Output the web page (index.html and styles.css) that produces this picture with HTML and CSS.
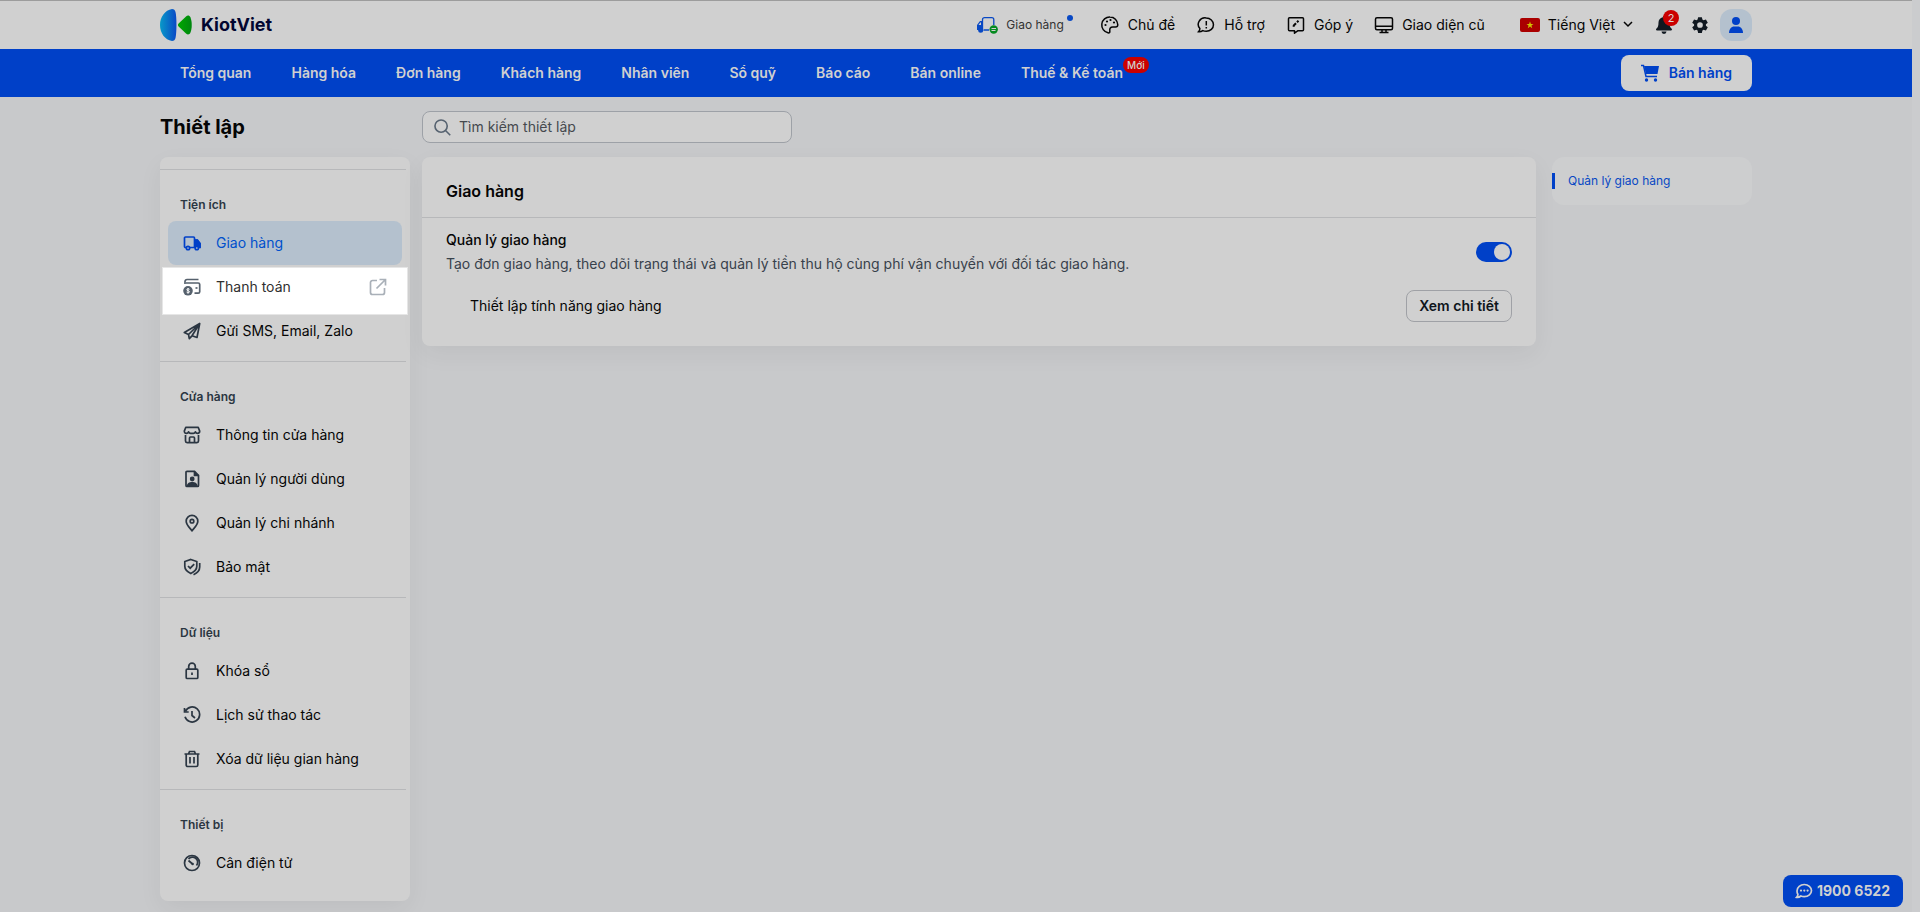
FILE: index.html
```html
<!DOCTYPE html>
<html lang="vi">
<head>
<meta charset="utf-8">
<meta name="viewport" content="width=device-width, initial-scale=1">
<title>KiotViet - Thiết lập</title>
<link rel="stylesheet" href="styles.css">
</head>
<body>
<div class="page">
  <header class="topbar">
    <a class="brand" href="#">
      <svg class="brand-mark" viewBox="0 0 32 32" aria-hidden="true">
        <defs>
          <linearGradient id="blue" x1="0" y1="0" x2="1" y2="0"><stop offset="0" stop-color="#0899c8"/><stop offset="1" stop-color="#0948c6"/></linearGradient>
          <linearGradient id="green" x1="0" y1="0" x2="1" y2="0"><stop offset="0" stop-color="#00a800"/><stop offset="1" stop-color="#00860f"/></linearGradient>
        </defs>
        <path fill="url(#blue)" d="M12 0C5 1 0 8 0 16s5 15 12 16c2 0 3-1 3.500-3 1.300-5 1.300-21 0-26C15 1 14 0 12 0z"/>
        <path fill="url(#green)" d="M18.600 14.500 26 7.500c1.500-1.400 3.500-1.200 4.400.8 1.800 4.400 1.800 11 0 15.400-.9 2-2.900 2.200-4.400.8l-7.400-7c-.9-.9-.9-2.100 0-3z"/>
      </svg>
      <span>KiotViet</span>
    </a>
    <nav class="tools" aria-label="Tiện ích nhanh">
      <a class="tool tool-small" href="#">
        <svg class="icon-truck" viewBox="0 0 22 18" fill="none" aria-hidden="true">
          <path d="M6.500 13V3.700a2 2 0 0 1 2-2h7.300a2 2 0 0 1 2 2V9M7.500 14H13" stroke="#0848c4" stroke-width="1.300"/>
          <path fill="#0848c4" fill-rule="evenodd" d="M4 5h2.500v9H1V9zM4.300 6.500 2.500 9H5V6.500z"/><circle cx="4.700" cy="14.200" r="2.500" fill="#0848c4"/>
          <circle cx="17.700" cy="13.500" r="4.200" fill="#058a20"/><path d="M15.500 12.500h4.500M15.500 14.500h4" stroke="#d0d0d0"/>
        </svg>
        <span>Giao hàng</span><i class="dot"></i>
      </a>
      <a class="tool" href="#">
        <svg viewBox="0 0 20 20" fill="none" stroke="currentColor" stroke-width="1.500" aria-hidden="true"><path d="M10 2a8 8 0 0 0-2 15.800c1.500.4 2-.6 1.800-1.800-.4-2.500.7-4 3-4h2.700c1.500 0 2.300-.8 2.300-2.300C17.600 5.300 14.200 2 10 2z"/><g fill="currentColor" stroke="none"><circle cx="5.500" cy="10" r="1.100"/><circle cx="7" cy="6.500" r="1.100"/><circle cx="10.500" cy="5" r="1.100"/><circle cx="14" cy="7.500" r="1.100"/></g></svg>
        <span>Chủ đề</span>
      </a>
      <a class="tool" href="#">
        <svg viewBox="0 0 20 20" fill="none" stroke="currentColor" stroke-width="1.500" aria-hidden="true"><path d="M10.300 3a7 6.500 0 0 1 0 13.300c-1.300 0-2.500-.2-3.500-.7-1.300 1-2.800 1.400-4.300 1.200.9-.9 1.400-2 1.400-3.200A6.800 6.500 0 0 1 10.300 3z"/><path d="M10.300 6v4.500M10.300 12v1.500"/></svg>
        <span>Hỗ trợ</span>
      </a>
      <a class="tool" href="#">
        <svg viewBox="0 0 20 20" fill="none" stroke="currentColor" stroke-width="1.500" stroke-linejoin="round" aria-hidden="true"><path d="M3.500 2.700h13a1 1 0 0 1 1 1v11a1 1 0 0 1-1 1H12l-3.500 2.500v-2.500h-5a1 1 0 0 1-1-1v-11a1 1 0 0 1 1-1z"/><path d="m7.500 11.700.3-1.200 2.200-2.200M11 7.300l1.500-1.500" stroke-width="2"/></svg>
        <span>Góp ý</span>
      </a>
      <a class="tool" href="#">
        <svg viewBox="0 0 20 20" fill="none" stroke="currentColor" stroke-width="1.500" aria-hidden="true"><rect x="1.500" y="2.700" width="17" height="12" rx="1.500"/><path d="M2 11.200h16M8 15v2M12 15v2M5.500 17.500h9"/></svg>
        <span>Giao diện cũ</span>
      </a>
    </nav>
    <div class="account">
      <button class="language" type="button">
        <svg class="flag" viewBox="0 0 20 14" aria-hidden="true"><rect width="20" height="14" rx="2" fill="#aa0000"/><path fill="#cfc400" d="m10 3.500.9 2.500h2.600l-2.100 1.600.8 2.600L10 8.600l-2.200 1.600.8-2.600L6.500 6h2.600z"/></svg>
        <span>Tiếng Việt</span>
        <svg class="chevron" viewBox="0 0 10 10" fill="none" stroke="currentColor" stroke-width="1.500" aria-hidden="true"><path d="m1 2 4 4 4-4"/></svg>
      </button>
      <button class="bell" type="button" aria-label="Thông báo">
        <svg viewBox="0 0 18 20" fill="currentColor" aria-hidden="true"><path d="M9 1c.7 0 1.200.5 1.200 1.200C13 2.800 14.500 5 14.500 7.500c0 3.500.7 5 2.200 6.300.6.600.3 1.700-.7 1.700H2c-1 0-1.300-1.100-.7-1.700 1.500-1.300 2.200-2.800 2.200-6.300C3.500 5 5 2.800 7.800 2.200 7.800 1.500 8.300 1 9 1zM6.500 16.500h5a2.500 2.500 0 0 1-5 0z"/></svg>
        <span class="count">2</span>
      </button>
      <button class="gear" type="button" aria-label="Thiết lập">
        <svg viewBox="0 0 24 24" fill="currentColor" aria-hidden="true"><path fill-rule="evenodd" d="M9.500 1.500h5l.7 3.200 1.500.9 3.200-1 2.500 4.300-2.500 2.200v1.800l2.500 2.200-2.500 4.300-3.200-1-1.500.9-.7 3.200h-5l-.7-3.200-1.500-.9-3.200 1-2.500-4.300 2.500-2.200v-1.800L1.600 8.900l2.500-4.300 3.200 1 1.500-.9zM12 8.200a3.800 3.800 0 1 0 0 7.600 3.800 3.800 0 0 0 0-7.600z"/></svg>
      </button>
      <button class="avatar" type="button" aria-label="Tài khoản">
        <svg viewBox="0 0 16 18" fill="currentColor" aria-hidden="true"><circle cx="8" cy="5" r="4"/><path d="M1 17c0-4 2.500-6.500 5-6.500h4c2.500 0 5 2.500 5 6.500z"/></svg>
      </button>
    </div>
  </header>

  <nav class="mainnav" aria-label="Menu chính">
    <a href="#">Tổng quan</a>
    <a href="#">Hàng hóa</a>
    <a href="#">Đơn hàng</a>
    <a href="#">Khách hàng</a>
    <a href="#">Nhân viên</a>
    <a href="#">Sổ quỹ</a>
    <a href="#">Báo cáo</a>
    <a href="#">Bán online</a>
    <a class="with-tag" href="#">Thuế &amp; Kế toán<span class="tag">Mới</span></a>
    <button class="sell" type="button">
      <svg viewBox="0 0 18 18" aria-hidden="true"><path d="M0 1.500h2.500L5 12.500h11" fill="none" stroke="currentColor" stroke-width="1.500"/><path fill="currentColor" d="M3 2h15l-1.500 8H5z"/><circle cx="5.500" cy="16" r="1.700" fill="currentColor"/><circle cx="14.500" cy="16" r="1.700" fill="currentColor"/></svg>
      <span>Bán hàng</span>
    </button>
  </nav>

  <div class="heading">
    <h1>Thiết lập</h1>
    <label class="search">
      <svg viewBox="0 0 18 18" fill="none" stroke="currentColor" stroke-width="1.700" aria-hidden="true"><circle cx="7.500" cy="7.500" r="6.500"/><path d="m12.200 12.200 5 5"/></svg>
      <input type="search" placeholder="Tìm kiếm thiết lập" aria-label="Tìm kiếm thiết lập">
    </label>
  </div>

  <div class="columns">
    <aside class="sidebar">
      <section>
        <h2>Tiện ích</h2>
        <a class="item active" href="#">
          <svg viewBox="0 0 18 18" fill="none" stroke="currentColor" aria-hidden="true"><path d="M3 13.500H2.500a1 1 0 0 1-1-1V4a1 1 0 0 1 1-1h8a1 1 0 0 1 1 1v9.500H7M11.500 6H14l3 3.500v4h-1"/><path d="M12 6h2.500L17 9.500v3.300h-5z" fill="currentColor"/><circle cx="5" cy="14" r="1.700"/><circle cx="13.800" cy="14" r="1.700" fill="#b4c1ce"/></svg>
          <span>Giao hàng</span>
        </a>
        <a class="item spotlight" href="#">
          <svg viewBox="0 0 18 18" fill="none" stroke="currentColor" aria-hidden="true"><path d="M2 6V3.500a2 2 0 0 1 2-2h11.500M3 5h12.200a1.500 1.500 0 0 1 1.500 1.500v7.200a1.500 1.500 0 0 1-1.500 1.500h-3.700"/><path d="M12.500 10h2"/><circle cx="5" cy="12.800" r="4.800" fill="currentColor" stroke="none"/><path d="M6.500 11.300c-.5-.7-2.700-.7-2.700.5s2.700.7 2.700 1.900-2.200 1.300-2.900.4M5 10v5.600" stroke="#fff" stroke-width="1"/></svg>
          <span>Thanh toán</span>
          <svg class="external" viewBox="0 0 18 18" fill="none" stroke="currentColor" aria-hidden="true"><path d="M8 2.500H3.500a2 2 0 0 0-2 2v10a2 2 0 0 0 2 2h10a2 2 0 0 0 2-2V10M10.500 1.500h6v6M16.500 1.500 7.500 10.500"/></svg>
        </a>
        <a class="item" href="#">
          <svg viewBox="0 0 18 18" fill="none" stroke="currentColor" stroke-linejoin="round" aria-hidden="true"><path d="M16.700 1.500 1.300 10.500l4.200 2 .8 4.200 2.700-2.900 5 1.700zM5.500 12.500 16.700 1.500 9 13.800"/></svg>
          <span>Gửi SMS, Email, Zalo</span>
        </a>
      </section>
      <section>
        <h2>Cửa hàng</h2>
        <a class="item" href="#">
          <svg viewBox="0 0 18 18" fill="none" stroke="currentColor" stroke-linejoin="round" aria-hidden="true"><path d="M2.800 1.300h12.400l1.500 3.800c0 1.600-1 2.300-2 2.300-1.200 0-2-.6-2.300-1.600-.5 1-1.300 1.600-2 1.600H7.600c-.7 0-1.500-.6-2-1.600-.3 1-1.100 1.600-2.300 1.600-1 0-2-.7-2-2.300z"/><path d="M2.500 9v6a1.600 1.600 0 0 0 1.600 1.600h9.800a1.600 1.600 0 0 0 1.600-1.600V9M6.500 16v-4a1 1 0 0 1 1-1h3a1 1 0 0 1 1 1v4"/></svg>
          <span>Thông tin cửa hàng</span>
        </a>
        <a class="item" href="#">
          <svg viewBox="0 0 18 18" fill="none" stroke="currentColor" aria-hidden="true"><path d="M4 1.300h7.500l4 4v10.200a1 1 0 0 1-1 1H4a1 1 0 0 1-1-1V2.300a1 1 0 0 1 1-1z"/><path d="M11.500 1.500v4h4" fill="currentColor"/><g fill="currentColor" stroke="none"><circle cx="9.200" cy="9" r="2.400"/><path d="M3.500 16.800c.5-3.600 2.600-4.800 5.700-4.800s5.200 1.200 5.700 4.800z"/></g></svg>
          <span>Quản lý người dùng</span>
        </a>
        <a class="item" href="#">
          <svg viewBox="0 0 18 18" fill="none" stroke="currentColor" aria-hidden="true"><path d="M9 1.300a5.800 5.800 0 0 0-5.800 5.900C3.200 11 7 14 9 16.700c2-2.700 5.800-5.700 5.800-9.500A5.800 5.800 0 0 0 9 1.300z"/><circle cx="9" cy="7.200" r="1.800"/></svg>
          <span>Quản lý chi nhánh</span>
        </a>
        <a class="item" href="#">
          <svg viewBox="0 0 18 18" fill="none" stroke="currentColor" aria-hidden="true"><path d="m7.800 1.500 6 2v4.800c0 3.500-2.800 5.700-6 7.200-3.200-1.500-6-3.700-6-7.200V3.500z"/><path d="m5 8 2.200 2.200 4-4M16.700 5v4c0 4-3 6.300-6.200 7.800"/></svg>
          <span>Bảo mật</span>
        </a>
      </section>
      <section>
        <h2>Dữ liệu</h2>
        <a class="item" href="#">
          <svg viewBox="0 0 18 18" fill="none" stroke="currentColor" aria-hidden="true"><rect x="3.200" y="7.200" width="11.600" height="9.300" rx="1"/><path d="M5.700 7V4.500a3.300 3.300 0 0 1 6.600 0V7M9 10.500V13"/></svg>
          <span>Khóa sổ</span>
        </a>
        <a class="item" href="#">
          <svg viewBox="0 0 18 18" fill="none" stroke="currentColor" aria-hidden="true"><path d="M2.500 5A7.500 7.500 0 1 1 2 10.800M1.500 2v4h4.200"/><path d="M9 5v4.500l3 2.500"/></svg>
          <span>Lịch sử thao tác</span>
        </a>
        <a class="item" href="#">
          <svg viewBox="0 0 18 18" fill="none" stroke="currentColor" aria-hidden="true"><path d="M1.500 4h15M5.500 4l1-2.500h5l1 2.500M3.200 4v11a1.500 1.500 0 0 0 1.500 1.500h8.600a1.500 1.500 0 0 0 1.500-1.500V4M7 7v6.500M11 7v6.500"/></svg>
          <span>Xóa dữ liệu gian hàng</span>
        </a>
      </section>
      <section>
        <h2>Thiết bị</h2>
        <a class="item" href="#">
          <svg viewBox="0 0 18 18" fill="none" stroke="currentColor" aria-hidden="true"><circle cx="9" cy="9" r="7.500"/><path d="M5.500 5a5 5 0 0 1 8 6.500M5.500 6.500 9.500 10"/><circle cx="9.700" cy="10" r="1.200" fill="currentColor" stroke="none"/></svg>
          <span>Cân điện tử</span>
        </a>
      </section>
    </aside>

    <main class="card">
      <h2>Giao hàng</h2>
      <div class="settings">
        <div class="setting">
          <div>
            <label class="name" for="delivery">Quản lý giao hàng</label>
            <p>Tạo đơn giao hàng, theo dõi trạng thái và quản lý tiền thu hộ cùng phí vận chuyển với đối tác giao hàng.</p>
          </div>
          <input class="switch" type="checkbox" role="switch" id="delivery" checked>
        </div>
        <div class="setting nested">
          <span>Thiết lập tính năng giao hàng</span>
          <button class="detail" type="button">Xem chi tiết</button>
        </div>
      </div>
    </main>

    <nav class="anchors" aria-label="Mục lục">
      <a href="#delivery">Quản lý giao hàng</a>
    </nav>
  </div>
</div>

<a class="hotline" href="tel:19006522">
  <svg viewBox="0 0 18 18" fill="none" stroke="currentColor" stroke-width="1.700" aria-hidden="true"><path d="M9.300 2.500c4 0 7.200 2.700 7.200 6.100s-3.200 6.100-7.200 6.100c-1.200 0-2.400-.2-3.400-.7-1.200 1-2.700 1.500-4.300 1.300.9-.9 1.400-1.800 1.300-3A5.600 5.600 0 0 1 2.100 8.600c0-3.400 3.200-6.100 7.200-6.100z"/><g fill="currentColor" stroke="none"><circle cx="6" cy="8.600" r="1.100"/><circle cx="9.300" cy="8.600" r="1.100"/><circle cx="12.600" cy="8.600" r="1.100"/></g></svg>
  <span>1900 6522</span>
</a>
</body>
</html>
```

FILE: styles.css
```css
:root {
  --surface: #d0d0d0;
  --ground: #c8c9cb;
  --blue: #0040c8;
  --tint: #b4c1ce;
  --line: #b7b8ba;
  --ink: #050505;
  --slate: #2b3642;
  --gutter: 160px;
}

* { box-sizing: border-box; }

body {
  margin: 0;
  background: #cbccce;
  color: var(--ink);
  font: 14px/20px Inter, "Noto Sans", sans-serif;
}

a { color: inherit; text-decoration: none; }
h1, h2, p { margin: 0; }
svg { display: block; flex: none; }

button {
  margin: 0;
  padding: 0;
  border: 0;
  background: none;
  color: inherit;
  font: inherit;
  cursor: pointer;
}

.page {
  min-height: 100vh;
  margin-right: 8px;
  background: var(--ground);
}

/* Top bar */
.topbar {
  display: flex;
  align-items: center;
  height: 49px;
  padding: 0 var(--gutter);
  border-top: 1px solid #9c9c9c;
  background: var(--surface);
}

.brand {
  display: flex;
  align-items: center;
  gap: 9px;
  margin-right: auto;
  color: #020630;
  font-size: 18px;
  font-weight: 700;
}
.brand-mark { width: 32px; height: 32px; }

.tools {
  display: flex;
  align-items: center;
  gap: 21px;
}
.tool {
  display: flex;
  align-items: center;
  gap: 8px;
}
.tool svg { width: 20px; height: 20px; }
.tool-small {
  position: relative;
  margin-right: 15px;
  color: #333;
  font-size: 12px;
}
.tool-small .icon-truck { width: 22px; height: 18px; }
.dot {
  position: absolute;
  top: 0;
  right: -9px;
  width: 6px;
  height: 6px;
  border-radius: 50%;
  background: #0848c4;
}

.account {
  display: flex;
  align-items: center;
  margin-left: 35px;
}
.language {
  display: flex;
  align-items: center;
  gap: 8px;
}
.flag { width: 20px; height: 14px; }
.chevron { width: 10px; height: 10px; }
.bell {
  position: relative;
  margin-left: 22px;
  color: #101820;
}
.bell svg { width: 18px; height: 20px; }
.count {
  position: absolute;
  top: -5px;
  right: -6px;
  width: 16px;
  height: 16px;
  border-radius: 50%;
  background: #cb0000;
  color: #d8d8d8;
  font-size: 11px;
  line-height: 16px;
}
.gear { margin-left: 18px; color: #101820; }
.gear svg { width: 18px; height: 18px; }
.avatar {
  display: grid;
  place-items: center;
  width: 32px;
  height: 32px;
  margin-left: 11px;
  border-radius: 12px;
  background: var(--tint);
  color: var(--blue);
}
.avatar svg { width: 16px; height: 18px; }

/* Main navigation */
.mainnav {
  display: flex;
  align-items: center;
  gap: 40px;
  height: 48px;
  padding: 0 var(--gutter) 0 180px;
  background: var(--blue);
  color: var(--surface);
  font-weight: 600;
}
.with-tag { position: relative; }
.tag {
  position: absolute;
  top: -6px;
  left: 100%;
  padding: 0 4px;
  border-radius: 8px;
  background: #cb0000;
  font-size: 10px;
  font-weight: 500;
  line-height: 16px;
}
.sell {
  display: flex;
  align-items: center;
  gap: 10px;
  height: 36px;
  margin-left: auto;
  padding: 0 20px;
  border-radius: 8px;
  background: var(--surface);
  color: var(--blue);
}
.sell svg { width: 18px; height: 18px; }

/* Title and search */
.heading {
  display: flex;
  align-items: center;
  gap: 12px;
  padding: 14px var(--gutter);
}
.heading h1 {
  width: 250px;
  font-size: 20px;
  font-weight: 700;
  line-height: 28px;
}
.search {
  display: flex;
  align-items: center;
  gap: 8px;
  width: 370px;
  height: 32px;
  padding: 0 11px;
  border: 1px solid #9da1a7;
  border-radius: 8px;
  background: var(--surface);
  color: #566270;
}
.search svg { width: 17px; height: 17px; }
.search input {
  flex: 1;
  min-width: 0;
  padding: 0;
  border: 0;
  outline: 0;
  background: none;
  color: var(--ink);
  font: inherit;
}
.search input::placeholder { color: #45494e; opacity: 1; }

/* Content columns */
.columns {
  display: grid;
  grid-template-columns: 250px 1fr 200px;
  align-items: start;
  padding: 0 var(--gutter) 10px;
}

.sidebar {
  padding: 12px 0 8px;
  border-radius: 8px;
  background: var(--surface);
  box-shadow: 0 8px 24px rgba(0, 0, 0, .05);
}
.sidebar section {
  margin-right: 4px;
  padding: 23px 4px 8px 8px;
  border-top: 1px solid var(--line);
}
.sidebar h2 {
  margin-bottom: 4px;
  padding-left: 12px;
  color: var(--slate);
  font-size: 12px;
  font-weight: 600;
  line-height: 24px;
}
.item {
  position: relative;
  display: flex;
  align-items: center;
  gap: 15px;
  height: 44px;
  padding: 0 15px;
  border-radius: 8px;
}
.item svg {
  width: 18px;
  height: 18px;
  color: var(--slate);
  stroke-width: 1.7;
}
.item.active { background: var(--tint); color: #0050cc; }
.item.active svg { color: var(--blue); }
.spotlight { z-index: 0; color: #303030; }
.spotlight svg { color: #56616d; }
.spotlight .external { margin-left: auto; color: #a9b0b8; }
.spotlight::before {
  content: "";
  position: absolute;
  z-index: -1;
  inset: 2px -6px -6px;
  border: 1px solid #e6e6e6;
  background: #fff;
}

.card {
  margin: 0 16px 0 12px;
  border-radius: 8px;
  background: var(--surface);
  box-shadow: 0 8px 24px rgba(0, 0, 0, .05);
}
.card h2 {
  padding: 22px 24px 14px;
  border-bottom: 1px solid var(--line);
  font-size: 16px;
  font-weight: 600;
  line-height: 24px;
}
.settings {
  display: grid;
  gap: 16px;
  padding: 12px 24px 24px;
}
.setting {
  display: flex;
  align-items: center;
  justify-content: space-between;
  gap: 24px;
}
.name {
  display: block;
  margin-bottom: 4px;
  font-weight: 500;
}
.setting p { color: #38414b; }
.nested { padding-left: 24px; }

.switch {
  appearance: none;
  flex: none;
  display: flex;
  align-items: center;
  width: 36px;
  height: 20px;
  margin: 0;
  padding: 2px;
  border-radius: 10px;
  background: #999;
  cursor: pointer;
}
.switch::before {
  content: "";
  width: 16px;
  height: 16px;
  border-radius: 50%;
  background: var(--surface);
}
.switch:checked { justify-content: flex-end; background: var(--blue); }

.detail {
  height: 32px;
  padding: 0 12px;
  border: 1px solid #9fa1a6;
  border-radius: 8px;
  color: #0f151b;
  font-weight: 600;
}

.anchors {
  padding: 16px 0;
  border-radius: 12px;
  background: #cdcecf;
  color: #0848c4;
  font-size: 12px;
  line-height: 16px;
}
.anchors a {
  display: block;
  padding-left: 13px;
  border-left: 3px solid var(--blue);
}

.hotline {
  position: fixed;
  right: 17px;
  bottom: 5px;
  display: flex;
  align-items: center;
  gap: 4px;
  height: 32px;
  padding: 0 13px 0 12px;
  border-radius: 8px;
  background: var(--blue);
  color: var(--surface);
  font-weight: 700;
}
.hotline svg { width: 18px; height: 18px; }
```
